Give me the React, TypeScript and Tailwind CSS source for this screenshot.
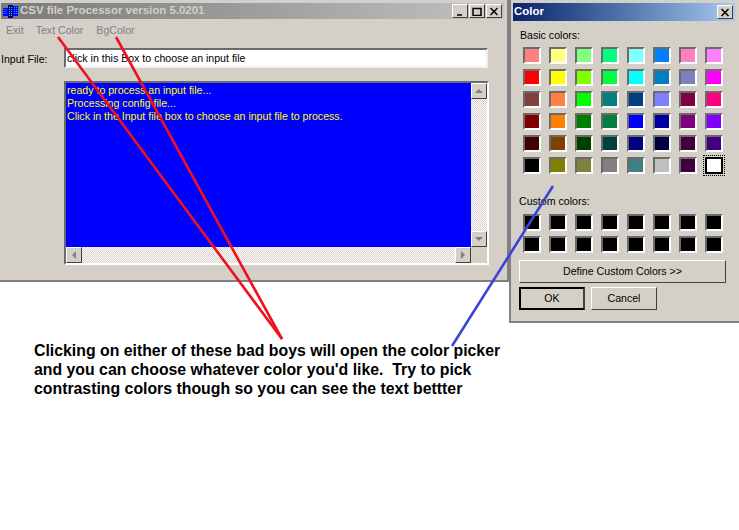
import React from 'react';

const basicColors = [
  ['#ff8080', '#ffff80', '#80ff80', '#00ff80', '#80ffff', '#0080ff', '#ff80c0', '#ff80ff'],
  ['#ff0000', '#ffff00', '#80ff00', '#00ff40', '#00ffff', '#0080c0', '#8080c0', '#ff00ff'],
  ['#804040', '#ff8040', '#00ff00', '#008080', '#004080', '#8080ff', '#800040', '#ff0080'],
  ['#800000', '#ff8000', '#008000', '#008040', '#0000ff', '#0000a0', '#800080', '#8000ff'],
  ['#400000', '#804000', '#004000', '#004040', '#000080', '#000040', '#400040', '#400080'],
  ['#000000', '#808000', '#808040', '#808080', '#408080', '#c0c0c0', '#400040', '#ffffff'],
];

const customColors = Array.from({ length: 16 }, () => '#000000');

const raised = 'border border-t-white border-l-white border-r-[#404040] border-b-[#404040] bg-[#d4d0c8]';
const track = 'bg-[repeating-conic-gradient(#ffffff_0_25%,#d4d0c8_0_50%)] bg-[length:2px_2px]';

const Swatch = ({ color, selected }: { color: string; selected?: boolean }) => (
  <div
    className={
      selected
        ? 'w-[18px] h-[17px] border-2 border-black outline-1 outline-dotted outline-offset-1 outline-black'
        : 'w-[18px] h-[17px] border-2 border-t-[#6b6b6b] border-l-[#6b6b6b] border-r-white border-b-white'
    }
    style={{ backgroundColor: color }}
  />
);

const CaptionButton = ({ children }: { children: React.ReactNode }) => (
  <div className={`${raised} w-[16px] h-[14px] flex items-center justify-center`}>
    <svg width="10" height="9" viewBox="0 0 10 9" fill="none" stroke="#000" strokeWidth="1.5">
      {children}
    </svg>
  </div>
);

const ScrollButton = ({ dir }: { dir: 'up' | 'down' | 'left' | 'right' }) => {
  const points = {
    up: '2,8 6,4 10,8',
    down: '2,4 6,8 10,4',
    left: '8,2 4,6 8,10',
    right: '4,2 8,6 4,10',
  }[dir];
  return (
    <div className={`${raised} w-[16px] h-[16px] shrink-0 flex items-center justify-center`}>
      <svg width="12" height="12" viewBox="0 0 12 12">
        <polygon points={points} fill="#808080" />
      </svg>
    </div>
  );
};

const MainWindow = () => (
  <div className="w-[509px] h-[282px] bg-[#d4d0c8] border-b-2 border-r-2 border-[#808080] pt-[3px] pl-px pr-[3px] font-['Liberation_Sans',sans-serif] text-[10.6px] text-black">
    {/* title bar */}
    <div className="h-[16px] flex items-center bg-gradient-to-r from-[#7a7a7a] to-[#c2c2c2]">
      <svg width="17" height="15" viewBox="0 0 17 15" className="ml-px shrink-0">
        <rect x="1" y="4" width="5" height="8" fill="#0000ff" />
        <rect x="6" y="1" width="5" height="13" fill="#00008a" />
        <rect x="11" y="2" width="5" height="10" fill="#0000ff" />
        <path d="M2 5v6M4 5v6M7.500 3v9M9.500 3v9M12.500 3v8M14.500 3v8" stroke="#00c8ff" strokeWidth="1" strokeDasharray="1 1" />
      </svg>
      <span className="ml-px text-[11.45px] font-bold leading-none text-[#d4d0c8] whitespace-nowrap">
        CSV file Processor version 5.0201
      </span>
      <div className="ml-auto mr-[2px] flex">
        <CaptionButton>
          <path d="M2 8h5" />
        </CaptionButton>
        <div className="w-px" />
        <CaptionButton>
          <path d="M1 1.500h8v7h-8z" />
        </CaptionButton>
        <div className="w-px" />
        <CaptionButton>
          <path d="M1.500 1l7 7M8.500 1l-7 7" />
        </CaptionButton>
      </div>
    </div>

    {/* menu */}
    <div className="mt-[4px] h-[14px] flex items-center pl-[5px] text-[#808080] leading-none">
      <span>Exit</span>
      <span className="ml-[12px]">Text Color</span>
      <span className="ml-[13px]">BgColor</span>
    </div>

    {/* input row */}
    <div className="mt-[11px] flex items-center">
      <label className="w-[63px] leading-none pt-[3px]">Input File:</label>
      <div className="w-[424px] h-[20px] bg-white border-2 border-t-[#6b6b6b] border-l-[#6b6b6b] border-r-[#efefef] border-b-[#efefef] pl-px flex items-center leading-none">
        click in this Box to choose an input file
      </div>
    </div>

    {/* log box */}
    <div className="mt-[13px] ml-[63px] w-[425px] h-[184px] flex flex-col border-2 border-t-[#6b6b6b] border-l-[#6b6b6b] border-r-white border-b-white">
      <div className="flex flex-1 min-h-0">
        <div className="flex-1 bg-[#0000ff] text-[#ffff00] pl-px pt-px leading-[13px]">
          <div>ready to process an input file...</div>
          <div>Processing config file...</div>
          <div>Click in the Input file box to choose an input file to process.</div>
        </div>
        <div className={`w-[16px] flex flex-col justify-between ${track}`}>
          <ScrollButton dir="up" />
          <ScrollButton dir="down" />
        </div>
      </div>
      <div className="flex">
        <div className={`flex-1 flex justify-between ${track}`}>
          <ScrollButton dir="left" />
          <ScrollButton dir="right" />
        </div>
        <div className="w-[16px] bg-[#d4d0c8]" />
      </div>
    </div>
  </div>
);

const ColorDialog = () => (
  <div className="w-[230px] h-[323px] bg-[#d4d0c8] border-l-2 border-b-2 border-[#808080] pl-px pt-[3px] font-['Liberation_Sans',sans-serif] text-[10.6px] text-black">
    <div className="ml-px w-[222px] h-[18px] flex items-center bg-gradient-to-r from-[#0a246a] to-[#a6caf0] pl-px">
      <span className="text-[11.45px] font-bold text-white leading-none">Color</span>
      <div className="ml-auto mr-[2px]">
        <CaptionButton>
          <path d="M1.500 1l7 7M8.500 1l-7 7" />
        </CaptionButton>
      </div>
    </div>

    <div className="pl-[8px] mt-[9px] leading-none h-[12px]">Basic colors:</div>
    <div className="ml-[11px] mt-[5px] grid grid-cols-[repeat(8,18px)] gap-x-[8px] gap-y-[5px]">
      {basicColors.flat().map((color, i) => (
        <Swatch key={i} color={color} selected={i === 47} />
      ))}
    </div>

    <div className="pl-[7px] mt-[22px] leading-none h-[12px]">Custom colors:</div>
    <div className="ml-[11px] mt-[6px] grid grid-cols-[repeat(8,18px)] gap-x-[8px] gap-y-[5px]">
      {customColors.map((color, i) => (
        <Swatch key={i} color={color} />
      ))}
    </div>

    <div className={`${raised} ml-[7px] mt-[7px] w-[207px] h-[23px] flex items-center justify-center`}>
      Define Custom Colors &gt;&gt;
    </div>
    <div className="ml-[7px] mt-[4px] flex gap-[6px]">
      <div className="w-[66px] h-[23px] border-2 border-t-black border-l-black border-r-[#404040] border-b-black bg-[#d4d0c8] flex items-center justify-center">
        OK
      </div>
      <div className={`${raised} w-[66px] h-[23px] flex items-center justify-center`}>Cancel</div>
    </div>
  </div>
);

export default function App() {
  return (
    <div className="relative w-[739px] h-[530px] bg-white overflow-hidden flex items-start">
      <div className="w-[509px]">
        <MainWindow />
        <p className="pl-[34px] pt-[59px] w-[520px] text-[15.84px] leading-[19px] font-bold text-black font-['Liberation_Sans',sans-serif] whitespace-pre">
          {"Clicking on either of these bad boys will open the color picker\nand you can choose whatever color you'd like.  Try to pick\ncontrasting colors though so you can see the text bettter"}
        </p>
      </div>
      <ColorDialog />

      {/* annotation arrows */}
      <svg className="absolute inset-0 pointer-events-none" width="739" height="530" viewBox="0 0 739 530">
        <line x1="58" y1="37" x2="282" y2="339" stroke="#f01020" strokeWidth="2.6" />
        <line x1="116" y1="37" x2="282" y2="339" stroke="#f01020" strokeWidth="2.6" />
        <line x1="553" y1="186" x2="452" y2="346" stroke="#3c44d8" strokeWidth="2.6" />
      </svg>
    </div>
  );
}
